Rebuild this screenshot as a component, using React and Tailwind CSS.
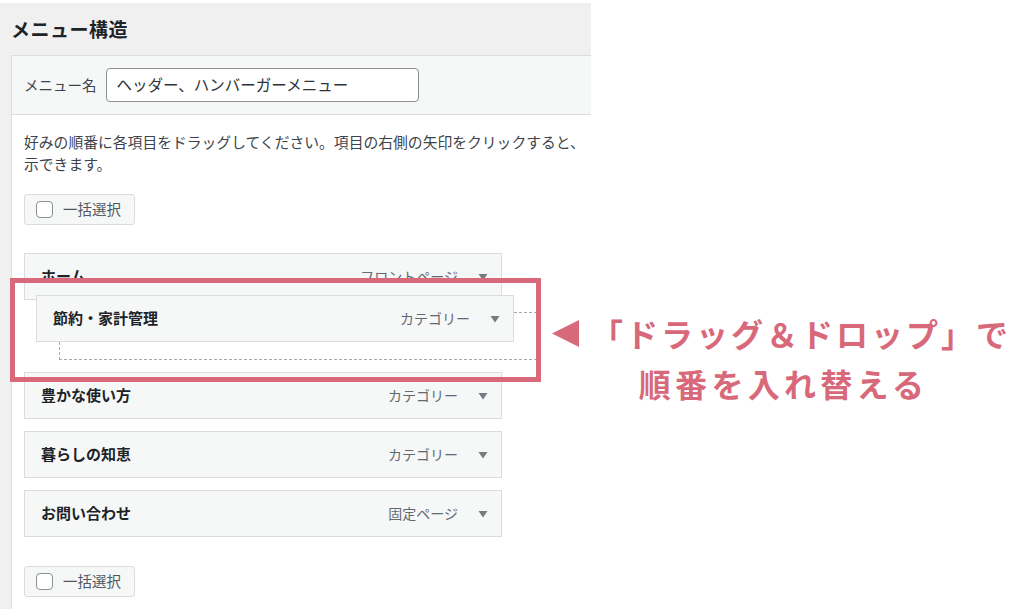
const jp = { fontFamily: '"Noto Sans CJK JP", "Noto Sans", sans-serif' };

const Arrow = ({ className = "" }) => (
  <svg width="10" height="8" viewBox="0 0 10 8" className={className}>
    <path d="M0.5 1 L9.5 1 L5 7.5 Z" fill="#787c82" />
  </svg>
);

const Checkbox = () => (
  <span className="inline-block w-[17px] h-[17px] rounded-[4px] border border-[#8c8f94] bg-white"></span>
);

const BulkButton = ({ className = "" }) => (
  <div
    className={`flex items-center gap-[10px] w-[111px] h-[31px] pl-[11px] rounded-[3px] border border-[#dcdcde] bg-[#f6f7f7] ${className}`}
  >
    <Checkbox />
    <span className="text-[14.5px] text-[#50575e] leading-none">一括選択</span>
  </div>
);

const MenuItem = ({ title, type, className = "" }) => (
  <div
    className={`flex items-center w-[478px] h-[47px] border border-[#dcdcde] bg-[#f6f7f7] pl-[16px] pr-[13px] ${className}`}
  >
    <span className="text-[15px] font-bold text-[#1d2327]">{title}</span>
    <span className="ml-auto text-[14px] text-[#646970]">{type}</span>
    <Arrow className="ml-[20px]" />
  </div>
);

export default function App() {
  return (
    <div className="relative w-[1024px] h-[609px] overflow-hidden bg-white" style={jp}>
      {/* 左側: WordPress メニュー画面 */}
      <div className="mt-[3px] w-[591px] h-[606px] bg-[#f0f0f1] overflow-hidden">
        <div className="h-[52px] flex items-center pl-[11px]">
          <h2 className="text-[19px] font-bold text-[#1d2327] tracking-[0.5px]">メニュー構造</h2>
        </div>

        <div className="ml-[11px] h-full border-l border-t border-[#dcdcde] bg-white">
          {/* メニュー名 */}
          <div className="h-[59px] flex items-center gap-[9px] pl-[12px] bg-[#f6f7f7] border-b border-[#dcdcde]">
            <span className="text-[14.5px] text-[#3c434a]">メニュー名</span>
            <div className="w-[313px] h-[34px] flex items-center pl-[10px] rounded-[4px] border border-[#8c8f94] bg-white">
              <span className="text-[15.5px] text-[#2c3338]">ヘッダー、ハンバーガーメニュー</span>
            </div>
          </div>

          <div className="pl-[12px] pt-[16px]">
            <p className="text-[14.8px] leading-[22px] text-[#3c434a] whitespace-nowrap">
              好みの順番に各項目をドラッグしてください。項目の右側の矢印をクリックすると、
              <br />
              示できます。
            </p>

            <BulkButton className="mt-[19px]" />

            <div className="mt-[28px] flex flex-col gap-[12px]">
              <MenuItem title="ホーム" type="フロントページ" />
              <div className="ml-[35px] w-[478px] h-[48px] border border-dashed border-[#a7aaad]"></div>
              <MenuItem title="豊かな使い方" type="カテゴリー" />
              <MenuItem title="暮らしの知恵" type="カテゴリー" />
              <MenuItem title="お問い合わせ" type="固定ページ" />
            </div>

            <BulkButton className="mt-[29px]" />
          </div>
        </div>
      </div>

      {/* ドラッグ中の項目 */}
      <div className="absolute left-[36px] top-[295px]">
        <MenuItem title="節約・家計管理" type="カテゴリー" className="border-[#8c8f94]" />
      </div>

      {/* 注釈 */}
      <div className="absolute left-[10px] top-[278px] w-[531px] h-[104px] border-[5px] border-[#d8697b]"></div>

      <div className="absolute left-[552px] top-[308px] flex flex-col items-center text-[#d8697b] font-bold text-[32px] leading-[50px]">
        <div className="flex items-center">
          <svg width="27" height="27" viewBox="0 0 27 27" className="mr-[12px]">
            <path d="M0 13.5 L27 0 L27 27 Z" fill="#d8697b" />
          </svg>
          <span className="tracking-[3px]">「ドラッグ＆ドロップ」で</span>
        </div>
        <span className="tracking-[4.3px] pl-[4px]">順番を入れ替える</span>
      </div>
    </div>
  );
}
